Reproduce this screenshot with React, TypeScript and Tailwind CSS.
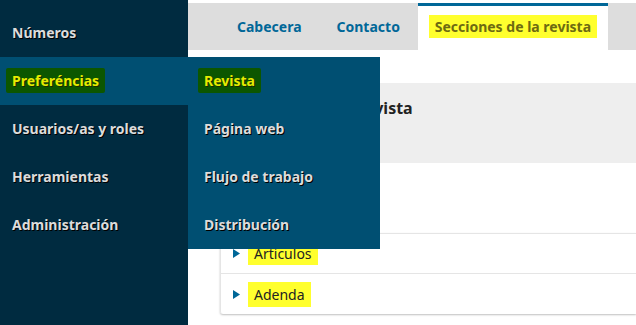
import React from 'react'

//////////
//■[ Sidebar items ]
const mainNav = ['Números', 'Preferéncias', 'Usuarios/as y roles', 'Herramientas', 'Administración']
const subNav = ['Revista', 'Página web', 'Flujo de trabajo', 'Distribución']

const font = { fontFamily: '"Noto Sans", "Open Sans", sans-serif' }

function Mark({ children, dark }: { children: React.ReactNode; dark?: boolean }) {
    // 蛍光ペン風のハイライト
    return dark ? (
        <span className="bg-[#0c5600] text-[#e6ec00] px-[6px] py-[2px] -mx-[6px] rounded-[2px] [text-shadow:1px_1px_0_#1b2a00]">
            {children}
        </span>
    ) : (
        <span className="bg-[#ffff2e] px-[6px] py-[2px] -mx-[6px]">{children}</span>
    )
}

function Caret() {
    return (
        <svg className="w-[7px] h-[9px] text-[#006798]" viewBox="0 0 7 9" fill="currentColor">
            <path d="M0 0 L7 4.5 L0 9 Z" />
        </svg>
    )
}

export default function App() {
    return (
        <div className="flex w-[636px] h-[325px] overflow-hidden bg-white relative" style={font}>

            {/* 左側：サイドバー */}
            <div className="w-[188px] shrink-0 bg-[#002b40] pt-[9px]">
                {mainNav.map((label, i) => (
                    <div
                        key={label}
                        className={`h-12 flex items-center pl-3 pb-[1px] text-[14px] font-bold text-[#dcdcdc] [text-shadow:1px_1px_0_#000] ${i === 1 ? 'bg-[#004f72] w-[192px]' : ''}`}
                    >
                        {i === 1 ? <Mark dark>{label}</Mark> : label}
                    </div>
                ))}
            </div>

            {/* サブメニュー（フライアウト） */}
            <div className="absolute left-[188px] top-[57px] w-[192px] bg-[#004f72] z-10">
                {subNav.map((label, i) => (
                    <div key={label} className="h-12 flex items-center pl-4 pb-[1px] text-[14px] font-bold text-[#dcdcdc] [text-shadow:1px_1px_0_#000]">
                        {i === 0 ? <Mark dark>{label}</Mark> : label}
                    </div>
                ))}
            </div>

            {/* 右側：メイン */}
            <div className="flex-1 min-w-0">

                {/* タブ */}
                <div className="mt-[3px] h-[47px] bg-[#dddddd] flex pl-8 text-[14px] font-bold text-[#006798]">
                    <div className="px-[17px] flex items-center">Cabecera</div>
                    <div className="px-[18px] flex items-center">Contacto</div>
                    <div className="w-[190px] bg-white border-t-[3px] border-[#006798] flex items-center justify-center pb-[3px]">
                        <span className="text-[#6d6a12]"><Mark>Secciones de la revista</Mark></span>
                    </div>
                </div>

                {/* 見出しエリア */}
                <div className="ml-8 mt-[33px] h-[80px] bg-[#eeeeee] flex items-start pt-[13px] pl-[14px]">
                    <h2 className="text-[16px] font-bold text-[#222]">Secciones de la revista</h2>
                </div>

                {/* セクション一覧 */}
                <div className="ml-8 mt-[70px] border-t border-l border-[#e5e5e5] shadow-[0_1px_2px_rgba(0,0,0,0.25)] rounded-bl-[3px] text-[14px] text-[#222]">
                    <div className="h-10 flex items-center gap-[14px] pl-3 border-b border-[#e5e5e5]">
                        <Caret />
                        <span className="border-t-[3px] border-[#0c5600] -mt-[3px]"><Mark>Articulos</Mark></span>
                    </div>
                    <div className="h-10 flex items-center gap-[14px] pl-3">
                        <Caret />
                        <Mark>Adenda</Mark>
                    </div>
                </div>
            </div>
        </div>
    )
}
